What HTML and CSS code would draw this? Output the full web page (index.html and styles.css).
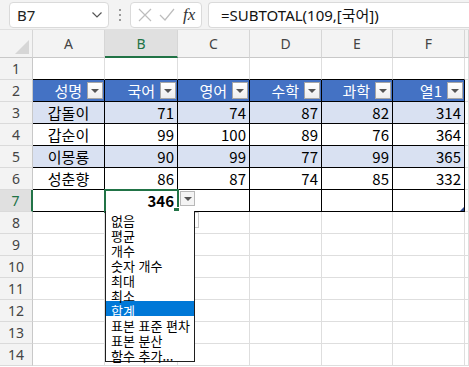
FILE: index.html
```html
<!DOCTYPE html>
<html lang="ko">
<head>
	<meta charset="utf-8" />
	<title>SUBTOTAL</title>
	<link rel="stylesheet" href="styles.css">
</head>
<body>
	<div class="fbar">
		<div class="namebox">
			<span>B7</span>
			<svg class="chev" width="12" height="8" viewBox="0 0 12 8"><path d="M1.5 1.5 L6 6 L10.5 1.5" fill="none" stroke="#555" stroke-width="1.2"/></svg>
		</div>
		<div class="vdots"><i></i><i></i><i></i></div>
		<div class="fxbox">
			<svg width="16" height="16" viewBox="0 0 16 16"><path d="M2 2 L14 14 M14 2 L2 14" stroke="#bdbdbd" stroke-width="1.2"/></svg>
			<svg width="18" height="16" viewBox="0 0 18 16"><path d="M2 8 L7 13 L16 2" fill="none" stroke="#bdbdbd" stroke-width="1.2"/></svg>
			<span class="fx">fx</span>
		</div>
		<div class="formula">=SUBTOTAL(109,[국어])</div>
	</div>

	<div class="sheet">
		<div class="corner"><svg width="20" height="20" viewBox="0 0 20 20"><path d="M18 4 L18 18 L4 18 Z" fill="#d6d6d6"/></svg></div>
		<div class="ch">A</div>
		<div class="ch on">B</div>
		<div class="ch">C</div>
		<div class="ch">D</div>
		<div class="ch">E</div>
		<div class="ch">F</div>
		<div class="ch"></div>

		<div class="rh">1</div>
		<div class="c top"></div><div class="c top"></div><div class="c top"></div><div class="c top"></div><div class="c top"></div><div class="c top"></div><div class="c"></div>

		<div class="rh">2</div>
		<div class="c t hd">성명<b class="flt"></b></div>
		<div class="c t hd">국어<b class="flt"></b></div>
		<div class="c t hd">영어<b class="flt"></b></div>
		<div class="c t hd">수학<b class="flt"></b></div>
		<div class="c t hd">과학<b class="flt"></b></div>
		<div class="c t hd">열1<b class="flt"></b></div>
		<div class="c"></div>

		<div class="rh">3</div>
		<div class="c t band nm">갑돌이</div>
		<div class="c t band n">71</div>
		<div class="c t band n">74</div>
		<div class="c t band n">87</div>
		<div class="c t band n">82</div>
		<div class="c t band n">314</div>
		<div class="c"></div>

		<div class="rh">4</div>
		<div class="c t nm">갑순이</div>
		<div class="c t n">99</div>
		<div class="c t n">100</div>
		<div class="c t n">89</div>
		<div class="c t n">76</div>
		<div class="c t n">364</div>
		<div class="c"></div>

		<div class="rh">5</div>
		<div class="c t band nm">이몽룡</div>
		<div class="c t band n">90</div>
		<div class="c t band n">99</div>
		<div class="c t band n">77</div>
		<div class="c t band n">99</div>
		<div class="c t band n">365</div>
		<div class="c"></div>

		<div class="rh">6</div>
		<div class="c t nm">성춘향</div>
		<div class="c t n">86</div>
		<div class="c t n">87</div>
		<div class="c t n">74</div>
		<div class="c t n">85</div>
		<div class="c t n">332</div>
		<div class="c"></div>

		<div class="rh on">7</div>
		<div class="c t"></div>
		<div class="c t n sel"><strong>346</strong><b class="handle"></b></div>
		<div class="c t"></div>
		<div class="c t"></div>
		<div class="c t"></div>
		<div class="c t last"><b class="resize"></b></div>
		<div class="c"></div>

		<div class="rh">8</div><div class="c"></div><div class="c"></div><div class="c"></div><div class="c"></div><div class="c"></div><div class="c"></div><div class="c"></div>
		<div class="rh">9</div><div class="c"></div><div class="c"></div><div class="c"></div><div class="c"></div><div class="c"></div><div class="c"></div><div class="c"></div>
		<div class="rh">10</div><div class="c"></div><div class="c"></div><div class="c"></div><div class="c"></div><div class="c"></div><div class="c"></div><div class="c"></div>
		<div class="rh">11</div><div class="c"></div><div class="c"></div><div class="c"></div><div class="c"></div><div class="c"></div><div class="c"></div><div class="c"></div>
		<div class="rh">12</div><div class="c"></div><div class="c"></div><div class="c"></div><div class="c"></div><div class="c"></div><div class="c"></div><div class="c"></div>
		<div class="rh">13</div><div class="c"></div><div class="c"></div><div class="c"></div><div class="c"></div><div class="c"></div><div class="c"></div><div class="c"></div>
		<div class="rh">14</div><div class="c"></div><div class="c"></div><div class="c"></div><div class="c"></div><div class="c"></div><div class="c"></div><div class="c"></div>

		<!-- total row drop-down -->
		<div class="ddbtn"><b></b></div>
		<div class="ddghost"></div>
		<ul class="ddlist">
			<li>없음</li>
			<li>평균</li>
			<li>개수</li>
			<li>숫자 개수</li>
			<li>최대</li>
			<li>최소</li>
			<li class="hi">합계</li>
			<li>표본 표준 편차</li>
			<li>표본 분산</li>
			<li>함수 추가...</li>
		</ul>
	</div>
</body>
</html>
```

FILE: styles.css
```css
body { margin: 0; background: #ffffff; font: 15px "Noto Sans", "Noto Sans CJK KR", sans-serif; color: #000; overflow: hidden; }

.fbar { display: flex; align-items: center; height: 30px; background: #f3f3f3; border-bottom: 1px solid #e0e0e0; box-sizing: border-box; padding: 2px 0 1px 9px; }
.namebox { display: flex; align-items: center; justify-content: space-between; width: 100px; height: 26px; box-sizing: border-box; background: #fff; border: 1px solid #dadada; border-radius: 4px; padding: 0 5px 0 7px; color: #222; }
.vdots { display: flex; flex-direction: column; gap: 3px; margin: 0 9px 0 10px; }
.vdots i { display: block; width: 2px; height: 2px; background: #9a9a9a; }
.fxbox { display: flex; align-items: center; gap: 5px; width: 72px; height: 26px; box-sizing: border-box; background: #fff; border: 1px solid #dadada; border-radius: 4px; padding: 0 4px 0 6px; }
.fx { font: italic 17px "Liberation Serif", serif; color: #333; margin-left: 2px; }
.formula { flex: 1; height: 26px; margin-left: 6px; box-sizing: border-box; background: #fff; border: 1px solid #dadada; border-right: none; border-radius: 4px 0 0 4px; padding: 1px 0 0 12px; line-height: 22px; color: #111; white-space: nowrap; }

.sheet { position: relative; display: grid; grid-template-columns: 33px 72px 73px 72px 72px 71px 72px 1fr; grid-template-rows: 28px repeat(14, 22px); }
.sheet > div { box-sizing: border-box; }

.corner { background: #f3f3f3; border-right: 1px solid #d6d6d6; border-bottom: 1px solid #c8c8c8; display: flex; align-items: flex-end; justify-content: flex-end; padding: 0 1px 1px 0; }
.ch { background: #f3f3f3; border-right: 1px solid #d6d6d6; border-bottom: 1px solid #c8c8c8; text-align: center; font-size: 14px; line-height: 27px; color: #444; }
.ch.on { background: #e0e0e0; color: #217346; border-bottom: 2px solid #217346; }
.rh { background: #f3f3f3; border-right: 1px solid #c8c8c8; border-bottom: 1px solid #dadada; text-align: center; font-size: 14px; line-height: 22px; color: #444; }
.rh.on { background: #e0e0e0; color: #217346; border-right: 2px solid #217346; }

.c { border-right: 1px solid #dedede; border-bottom: 1px solid #dedede; font-family: "Noto Sans CJK KR", sans-serif; font-size: 15px; line-height: 21px; white-space: nowrap; }
.c.top { border-bottom-color: #000; }
.c.t { border-right-color: #000; border-bottom-color: #000; }
.hd { position: relative; background: #4472c4; color: #fff; text-align: right; padding-right: 22px; }
.band { background: #d9e1f2; }
.nm { text-align: center; }
.n { text-align: right; padding-right: 3px; }

.flt { position: absolute; right: 1px; top: 2px; width: 16px; height: 17px; box-sizing: border-box; background: linear-gradient(#ffffff, #eeeeee); border: 1px solid #a6a6a6; }
.flt::after, .ddbtn b { content: ""; position: absolute; left: 3px; top: 6px; border-left: 4px solid transparent; border-right: 4px solid transparent; border-top: 4px solid #555; }

.sel { position: relative; outline: 2px solid #217346; outline-offset: -1px; }
.sel strong { font-weight: bold; }
.handle { position: absolute; right: -3px; bottom: -3px; width: 5px; height: 5px; background: #217346; border: 1px solid #fff; }
.last { position: relative; }
.resize { position: absolute; right: 0; bottom: 0; width: 0; height: 0; border-left: 4px solid transparent; border-bottom: 4px solid #2f4b8f; }

.ddbtn { position: absolute; left: 180px; top: 161px; width: 15px; height: 15px; box-sizing: border-box; background: #f4f4f4; border: 1px solid #b8b8b8; }
.ddbtn b { left: 3px; top: 5px; }
.ddghost { position: absolute; left: 194px; top: 182px; width: 5px; height: 16px; box-sizing: border-box; border: 1px solid #c8c8c8; border-left: none; }
.ddlist { position: absolute; left: 105px; top: 181px; width: 90px; margin: 0; padding: 0; list-style: none; background: #fff; border: 1px solid #1e1e1e; border-top: none; box-sizing: border-box; }
.ddlist li { height: 15px; line-height: 14px; padding: 0 0 1px 5px; box-sizing: border-box; font: 13px "Noto Sans CJK KR", sans-serif; color: #000; white-space: nowrap; }
.ddlist li.hi { background: #0078d7; color: #fff; }
```
